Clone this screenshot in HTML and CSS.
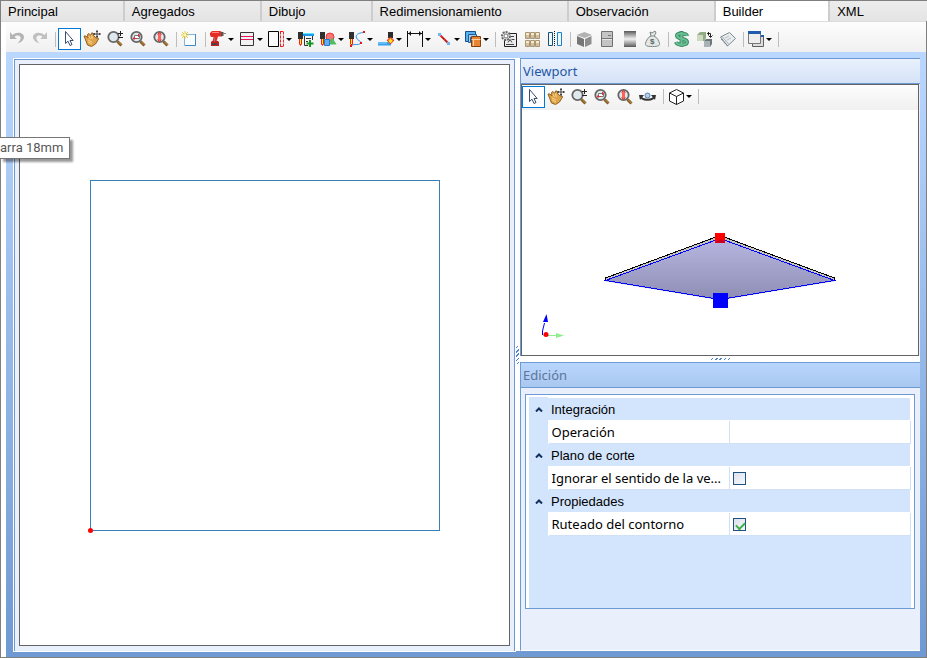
FILE: index.html
```html
<!DOCTYPE html>
<html lang="es">
<head>
    <meta charset="UTF-8">
    <meta name="viewport" content="width=device-width, initial-scale=1.0">
    <title>Builder</title>
    <link rel="stylesheet" href="styles.css">
</head>
<body>
    <!-- Shared icons and gradients -->
    <svg class="defs" aria-hidden="true">
        <defs>
            <linearGradient id="metal" x1="0" y1="0" x2="0" y2="1">
                <stop offset="0" stop-color="#555"/>
                <stop offset="0.15" stop-color="#888"/>
                <stop offset="0.5" stop-color="#f0f0f0"/>
                <stop offset="0.85" stop-color="#888"/>
                <stop offset="1" stop-color="#555"/>
            </linearGradient>
            <linearGradient id="board" x1="0" y1="0" x2="0" y2="1">
                <stop offset="0" stop-color="#b6b6e0"/>
                <stop offset="1" stop-color="#8d8db4"/>
            </linearGradient>
        </defs>
        <symbol id="pointer" viewBox="0 0 18 18">
            <path d="M5.500 1.500v12l2.500-2.300 2 4.300 2-1-2-4h3.200z" fill="#fff" stroke="#3b4d70"/>
        </symbol>
        <symbol id="hand" viewBox="0 0 18 18">
            <path d="M1 6l2 0 2 2L4.500 4.500l1.500-1 2 2L8.500 3l1.500 0 .8 3L12 7l1.500 1 1.500 0 .5 1-3 5-4 2.500L4.500 15 3 11z" fill="#dfa34a" stroke="#94601d"/>
            <path d="M5.500 6l2 3M8.500 5l.8 4M5 10l4 2M5 12l4 2" stroke="#f9d78e" fill="none"/>
            <path d="M14 0v8M10 4h8M13 1.500h2M13 6.500h2M11.500 3v2M16.500 3v2" stroke="#444" fill="none"/>
        </symbol>
        <symbol id="lens" viewBox="0 0 18 18">
            <path d="M10 10l1.500 1.500" stroke="#555" stroke-width="2"/>
            <path d="M11.500 11.500l4 4" stroke="#81561f" stroke-width="3"/>
            <path d="M12 11.500l3.500 3.500" stroke="#c59a4c"/>
            <circle cx="7.500" cy="7" r="5.200" fill="#dfe8ec" stroke="#666" stroke-width="1.800"/>
        </symbol>
        <symbol id="zoom" viewBox="0 0 18 18">
            <use href="#lens"/>
            <path d="M14.500 1v5M12 3.500h5M12 7.500h5" stroke="#222" fill="none"/>
        </symbol>
        <symbol id="zoom-window" viewBox="0 0 18 18">
            <use href="#lens"/>
            <path d="M5.500 5.500h5v3h-5z" fill="#fff" stroke="#777"/>
            <path d="M4 8.500h4M9.500 4v3M9 5h2M5 7v3" stroke="#d4353c" fill="none"/>
        </symbol>
        <symbol id="zoom-all" viewBox="0 0 18 18">
            <use href="#lens"/>
            <path d="M7.500 3v8" stroke="#ff6058" stroke-width="3"/>
            <path d="M5.500 4.500l2-2 2 2M5.500 9.500l2 2 2-2" stroke="#e03838" fill="none"/>
        </symbol>
        <symbol id="bit" viewBox="0 0 18 18">
            <path d="M0 2h5v7H0z" fill="#303030"/>
            <path d="M1 9h3v5l-1.500 2L1 14z" fill="#e22"/>
            <path d="M2 9h1v5H2z" fill="#ff0"/>
        </symbol>
    </svg>

    <div class="window">
        <nav class="tabs">
            <button class="tab">Principal</button>
            <button class="tab">Agregados</button>
            <button class="tab">Dibujo</button>
            <button class="tab">Redimensionamiento</button>
            <button class="tab">Observación</button>
            <button class="tab active">Builder</button>
            <button class="tab last">XML</button>
        </nav>

        <div class="toolbar main-toolbar">
            <button class="tool" aria-label="Deshacer"><svg viewBox="0 0 18 18"><path d="M2 2v7h7L6.500 7C9 4.500 13.500 5.500 12.500 9c-.5 2-2 3-3 4.500 3-1 6.500-3 6.500-6.500C16 2.500 9 1 4.500 5z" fill="#b4b4b4"/></svg></button>
            <button class="tool" aria-label="Rehacer"><svg viewBox="0 0 18 18"><path d="M16 2v7H9l2.500-2C9 4.500 4.500 5.500 5.500 9c.5 2 2 3 3 4.500C5.500 12.500 2 10.500 2 7c0-4.500 7-6 11.500-2z" fill="#c0c0c0"/></svg></button>
            <span class="sep"></span>
            <button class="tool selected" aria-label="Seleccionar"><svg><use href="#pointer"/></svg></button>
            <button class="tool" aria-label="Mover"><svg><use href="#hand"/></svg></button>
            <button class="tool" aria-label="Zoom"><svg><use href="#zoom"/></svg></button>
            <button class="tool" aria-label="Zoom ventana"><svg><use href="#zoom-window"/></svg></button>
            <button class="tool" aria-label="Zoom total"><svg><use href="#zoom-all"/></svg></button>
            <span class="sep"></span>
            <button class="tool" aria-label="Nuevo"><svg viewBox="0 0 18 18"><path d="M3.500 4.500h11v11h-11z" fill="#fafdff" stroke="#88b5d5"/><path d="M14.500 4v11.500H4" fill="none" stroke="#4389c4"/><path d="M4 1v8M0 5h8M1 2l6 6M7 2L1 8" stroke="#efcc3b"/><path d="M3 4h2v2H3z" fill="#fffbb8"/></svg></button>
            <span class="sep"></span>
            <button class="tool drop" aria-label="Perforación"><svg viewBox="0 0 18 18"><path d="M0 3l2-2h8l2 1v4.500H8l-1.500 5h-4l1-4.500H1L0 5z" fill="#e52b27"/><path d="M2 2.500h7" stroke="#ff8577"/><path d="M2 11h6l1 1v4H1v-4z" fill="#c91d20"/><path d="M11 2h2.500v4H11z" fill="#555"/><path d="M2 14h5" stroke="#444" stroke-width="2"/><path d="M13 3.500h3M4.500 7.500v4" stroke="#888"/></svg></button>
            <button class="tool drop" aria-label="Ranura"><svg viewBox="0 0 18 18"><path d="M1.500 2.500h13v13h-13z" fill="#f2f2f2" stroke="#333"/><path d="M2 6.500h12M2 9.500h12" stroke="#e41559"/></svg></button>
            <button class="tool drop" aria-label="Canto"><svg viewBox="0 0 18 18"><path d="M.5 1.500h10v15H.5z" fill="#fafafa" stroke="#000"/><path d="M12.500 1.500v15M15.500 1.500v15M12 1.500h4M12 16.500h4" stroke="#e22" stroke-dasharray="3 1" fill="none"/></svg></button>
            <button class="tool" aria-label="Agregar operación"><svg viewBox="0 0 18 18"><use href="#bit" x="1" width="18" height="18"/><path d="M6 3h11v3H6z" fill="#1d9be8"/><path d="M6 3.500h11" stroke="#55e8ff"/><path d="M15.500 6v4M7.500 6v9.500H11M9 8.500h5M9 11.500h2" stroke="#333" fill="none"/><path d="M13 10v7M9.500 13.500h7" stroke="#189420" stroke-width="2"/></svg></button>
            <button class="tool drop" aria-label="Figuras"><svg viewBox="0 0 18 18"><circle cx="10" cy="7" r="4" fill="#f87878" stroke="#ed3535"/><path d="M12 7l4.500 7.500H9z" fill="#50bd65"/><path d="M4.500 9.500h5v6h-5z" fill="#66acef" stroke="#257bd2"/><use href="#bit" width="18" height="18"/></svg></button>
            <button class="tool drop" aria-label="Contorno"><svg viewBox="0 0 18 18"><path d="M14.500 2.500C9 3 6 5 7.500 8s6 3.500 4 5.500-6 0-9.500 2" fill="none" stroke="#2993e8"/><path d="M14 1h2v2h-2zM11 12h2v2h-2zM1 15h2v2H1z" fill="#e11"/><use href="#bit" width="18" height="18"/></svg></button>
            <button class="tool drop" aria-label="Rebaje"><svg viewBox="0 0 18 18"><path d="M0 12h10l3 1v2.500H0z" fill="#39a2ee"/><path d="M0 13h9" stroke="#91d5ff"/><path d="M10 2h5v6h-5z" fill="#2c2c2c"/><path d="M11 8h3v2h2l-3.500 4L9 10h2z" fill="#ffe913" stroke="#ed3020"/></svg></button>
            <button class="tool drop" aria-label="Cota"><svg viewBox="0 0 18 18"><path d="M.5 1v16M15.500 1v16M1 3.500h14M3.500 1.500v4M12.500 1.500v4M2.500 2.500v2M13.500 2.500v2" stroke="#111" fill="none"/></svg></button>
            <button class="tool drop" aria-label="Línea"><svg viewBox="0 0 18 18"><path d="M3 4l10 10" stroke="#d22" stroke-width="2"/><path d="M4 5l8 8" stroke="#222" stroke-dasharray="1 3"/><path d="M2 3h3v3H2zM11 12h3v3h-3z" fill="#6fb5ef"/></svg></button>
            <button class="tool drop" aria-label="Orden"><svg viewBox="0 0 18 18"><path d="M.5 1.500h10v10H.5z" fill="#5cb0ee" stroke="#164f8b"/><path d="M3.500 4.500h8v3h-6v5h-2z" fill="#9bd1f7" stroke="#195f9e"/><path d="M6.500 6.500h9v10h-9z" fill="#e88434" stroke="#83400d"/><path d="M6.500 9.500h9M8.500 10v6" stroke="#ffd0a0"/></svg></button>
            <span class="sep"></span>
            <button class="tool" aria-label="Informe"><svg viewBox="0 0 18 18"><path d="M4.500 3.500h12v13h-12z" fill="#eee" stroke="#222"/><path d="M8 12.500l2-3 2 3M6 14.500h8M11 6.500h3M11.500 9.500h3" fill="none" stroke="#444"/><circle cx="6" cy="6" r="4" fill="#e8e8e8" stroke="#666" stroke-width="2" stroke-dasharray="2 1"/><circle cx="6" cy="6" r="2" fill="#fff" stroke="#777"/></svg></button>
            <button class="tool" aria-label="Piezas"><svg viewBox="0 0 18 18"><g fill="#d1bf9e" stroke="#aa9674"><path d="M2.500 2.500h4v6h-4zM7.500 2.500h4v6h-4zM12.500 2.500h4v6h-4zM2.500 10.500h4v6h-4zM7.500 10.500h4v6h-4zM12.500 10.500h4v6h-4z"/></g><path d="M3 4h3M8 4h3M13 4h3M3 12h3M8 12h3M13 12h3" stroke="#f6e9cc" stroke-width="2"/></svg></button>
            <button class="tool" aria-label="Simetría"><svg viewBox="0 0 18 18"><path d="M2.500 2.500h4v13h-4z" fill="#eef6fa" stroke="#165077"/><path d="M8.500 1v16" stroke="#111" stroke-dasharray="1 1"/><path d="M11.500 2.500h4v13h-4z" fill="#edf8ff" stroke="#1683cc"/></svg></button>
            <span class="sep"></span>
            <button class="tool" aria-label="Módulo"><svg viewBox="0 0 18 18"><path d="M1.500 5l8-3 7.500 3-7.500 3z" fill="#b2b2b2"/><path d="M2 6l7 3v8l-7-3z" fill="#777"/><path d="M10 9l6.500-3v8L10 17z" fill="#8e8e8e"/></svg></button>
            <button class="tool" aria-label="Puerta"><svg viewBox="0 0 18 18"><path d="M3.500 1.500h11v15h-11z" fill="#c4c4c4" stroke="#707070"/><path d="M4 8.500h10M10 5.500h3" stroke="#777"/><path d="M4 9.500h10" stroke="#e5e5e5"/></svg></button>
            <button class="tool" aria-label="Material"><svg viewBox="0 0 18 18"><path d="M3 1h12v16H3z" fill="url(#metal)"/></svg></button>
            <button class="tool" aria-label="Presupuesto"><svg viewBox="0 0 18 18"><path d="M6 2l2 1 3-2 1 2-2 3c3 1 5 5 5.500 7.500.5 2-1 3-7 3s-7.500-1-7-3C2 11 4 7 7 6z" fill="#e4e9e7" stroke="#7a8583"/><path d="M6 6h5" stroke="#8b9593"/><text x="6" y="14" class="bag-sign">$</text></svg></button>
            <span class="sep"></span>
            <button class="tool" aria-label="Costos"><svg viewBox="0 0 18 18"><path d="M8.500 1v16M14 6c-.5-3-9.500-3.500-10-.5-.5 4 10 2.500 10 6.500 0 3.500-10 3.500-11 0" fill="none" stroke="#378963" stroke-width="4"/><path d="M8.500 2v14M14 6c-.5-3-9.500-3.500-10-.5-.5 4 10 2.500 10 6.500 0 3.500-10 3.500-11 0" fill="none" stroke="#6abf91" stroke-width="2"/></svg></button>
            <button class="tool" aria-label="Reemplazar"><svg viewBox="0 0 18 18"><path d="M1 5l3-3h6v6l-2 3H1z" fill="#91ab83"/><path d="M1 5h6v6H1z" fill="#ccdabf"/><path d="M8 11l2-2h6v5l-2 3H8z" fill="#6b787b"/><path d="M8 11h6v6H8z" fill="#a9b3b6"/><path d="M11 3.500h3.500V7M12.500 5.500l2 2 2-2M12.500 2v3" fill="none" stroke="#222"/></svg></button>
            <button class="tool" aria-label="Etiqueta"><svg viewBox="0 0 18 18"><path d="M1.500 7l9-4.500 6 6-8 7.500z" fill="#e9edef" stroke="#7d8991"/><path d="M6 8l4-2M8 10l4-2" stroke="#b3bdc4" fill="none"/><path d="M3.500 7l6 7" stroke="#a3afb7"/><path d="M2 9l6.500 7" stroke="#596771" stroke-dasharray="1 1"/></svg></button>
            <span class="sep"></span>
            <button class="tool drop" aria-label="Ventanas"><svg viewBox="0 0 18 18"><path d="M4.500 5.500h11v11h-11z" fill="#dedede" stroke="#606060"/><path d="M4 5h12v2H4z" fill="#225cae"/><path d="M.5 1.500h12v12H.5z" fill="#eee" stroke="#777"/><path d="M0 1h13v3H0z" fill="#225cae"/></svg></button>
            <span class="sep"></span>
        </div>

        <main class="workspace">
            <section class="panel drawing-panel">
                <svg class="drawing" aria-label="Pieza">
                    <rect x="70.500" y="115.500" width="349" height="350" fill="none" stroke="#3b7fb5"/>
                    <circle cx="70.500" cy="465.500" r="2.500" fill="#f00"/>
                </svg>
            </section>

            <div class="splitter vertical"><span class="grip"></span></div>

            <div class="side">
                <section class="panel viewport">
                    <h2 class="panel-title">Viewport</h2>
                    <div class="view">
                        <div class="toolbar">
                            <button class="tool selected" aria-label="Seleccionar"><svg><use href="#pointer"/></svg></button>
                            <button class="tool" aria-label="Mover"><svg><use href="#hand"/></svg></button>
                            <button class="tool" aria-label="Zoom"><svg><use href="#zoom"/></svg></button>
                            <button class="tool" aria-label="Zoom ventana"><svg><use href="#zoom-window"/></svg></button>
                            <button class="tool" aria-label="Zoom total"><svg><use href="#zoom-all"/></svg></button>
                            <button class="tool" aria-label="Orbitar"><svg viewBox="0 0 18 18"><path d="M2 8c0 5 13 5 13 0" fill="none" stroke="#333" stroke-width="2"/><path d="M0 7h5L1 12zM17 7h-5l4 5z" fill="#333"/><circle cx="8.500" cy="7.500" r="2.500" fill="#b5ceeb" stroke="#5b7fae"/></svg></button>
                            <span class="sep"></span>
                            <button class="tool drop" aria-label="Vistas"><svg viewBox="0 0 18 18"><path d="M1.500 5l7-3.500 7 3.500v8l-7 3.500-7-3.500zM1.500 5l7 3.500 7-3.500M8.500 8.500v8" fill="#fff" stroke="#222"/></svg></button>
                            <span class="sep"></span>
                        </div>
                        <svg class="scene" aria-label="Vista 3D">
                            <path d="M83 168l115-43 115 43v3L198 190 83 171z" fill="#c6c6bf"/>
                            <path d="M83 171l115-42 115 42-115 19z" fill="url(#board)"/>
                            <g fill="none" shape-rendering="crispEdges">
                                <path d="M83.500 170v-2L198 125.500l114.500 42.500v2" stroke="#000"/>
                                <path d="M83.500 170.500l114.500-42 114.500 42-114.500 19z" stroke="#00f"/>
                            </g>
                            <path d="M193 123h10v10h-10z" fill="#f00"/>
                            <path d="M194 132l4-3 5 2v2h-9z" fill="#d00020"/>
                            <path d="M191 183h15v15h-15z" fill="#00f"/>
                            <path d="M20.500 225v-4l2-8" stroke="#00f" fill="none"/>
                            <path d="M24.500 204l1.500 8h-5z" fill="#00f"/>
                            <path d="M21 225.500h14" stroke="#90ee90"/>
                            <path d="M34 223l8 2.500-8 2.500z" fill="#90ee90"/>
                            <circle cx="24" cy="224.500" r="2.500" fill="#f00"/>
                        </svg>
                    </div>
                </section>

                <div class="splitter horizontal"><span class="grip"></span></div>

                <section class="panel editor">
                    <h2 class="panel-title inactive">Edición</h2>
                    <div class="properties">
                        <div class="properties-inner">
                            <table>
                                <colgroup><col class="col-arrow"><col class="col-name"><col></colgroup>
                                <tbody>
                                    <tr class="group"><td><svg viewBox="0 0 8 5"><path d="M1 4.500l3-3 3 3" fill="none" stroke="#12305f" stroke-width="2"/></svg></td><th colspan="2">Integración</th></tr>
                                    <tr><td></td><th><label for="operation">Operación</label></th><td class="value"><input type="text" id="operation"></td></tr>
                                    <tr class="group"><td><svg viewBox="0 0 8 5"><path d="M1 4.500l3-3 3 3" fill="none" stroke="#12305f" stroke-width="2"/></svg></td><th colspan="2">Plano de corte</th></tr>
                                    <tr><td></td><th><label for="grain">Ignorar el sentido de la ve...</label></th><td class="value"><input type="checkbox" id="grain"></td></tr>
                                    <tr class="group"><td><svg viewBox="0 0 8 5"><path d="M1 4.500l3-3 3 3" fill="none" stroke="#12305f" stroke-width="2"/></svg></td><th colspan="2">Propiedades</th></tr>
                                    <tr><td></td><th><label for="outline">Ruteado del contorno</label></th><td class="value"><input type="checkbox" id="outline" checked></td></tr>
                                </tbody>
                            </table>
                        </div>
                    </div>
                </section>
            </div>
        </main>

        <div class="tooltip">arra 18mm</div>
    </div>
</body>
</html>
```

FILE: styles.css
```css
/* Reset styles */
* {
    margin: 0;
    padding: 0;
    box-sizing: border-box;
}

body {
    font-family: "Liberation Sans", Arial, sans-serif;
    font-size: 13px;
    color: #000;
    background-color: #fff;
}

button {
    font: inherit;
    color: inherit;
    background: none;
    border: none;
}

.defs {
    position: absolute;
    width: 0;
    height: 0;
}

.window {
    display: flex;
    flex-direction: column;
    min-height: 100vh;
    position: relative;
    border: 1px solid #7f7f7f;
}

/* Tabs */
.tabs {
    display: flex;
    height: 21px;
    background-color: #e6e6e6;
    border-bottom: 1px solid #dcdcdc;
}

.tab {
    padding: 0 65px 0 7px;
    text-align: left;
    background: linear-gradient(#ececec, #e4e4e4);
    border-right: 2px solid #cdcdcd;
}

.tab.active {
    background: #fff;
}

.tab.last {
    flex: 1;
    border-right: none;
}

/* Toolbars */
.toolbar {
    display: flex;
    align-items: center;
    background: linear-gradient(#fdfdfd, #f0f0f0);
}

.main-toolbar {
    height: 30px;
    padding: 6px 0 2px;
    margin-left: 5px;
}

.tool {
    display: flex;
    align-items: center;
    width: 23px;
    height: 22px;
    padding: 0 3px 0 2px;
}

.tool svg {
    display: block;
    flex: none;
    width: 18px;
    height: 18px;
}

.tool.selected {
    padding: 0 2px 0 1px;
    background-color: #fff;
    border: 1px solid #0078d7;
}

.tool.drop {
    width: 29px;
}

.tool.drop::after {
    content: "";
    border: 3px solid transparent;
    border-top-color: #000;
    border-bottom: none;
}

.sep {
    width: 6px;
    height: 15px;
    background: linear-gradient(#bdbdbd, #bdbdbd) 3px 0 / 1px 100% no-repeat;
}

.bag-sign {
    font-size: 8px;
    font-weight: bold;
    fill: #58645f;
}

/* Workspace */
.workspace {
    display: grid;
    grid-template-columns: minmax(0, 1fr) 5px 400px;
    flex: 1;
    margin-left: 5px;
    padding: 6px 6px 6px 8px;
    background: linear-gradient(#bad7ff, #6f99d2);
}

.panel {
    background-color: #e9f0fb;
    border: 1px solid #6d99d4;
}

.drawing-panel {
    display: flex;
    margin-top: 1px;
    padding: 4px 4px 5px;
    border-bottom: none;
    box-shadow: 0 0 0 1px #fff;
}

.drawing {
    flex: 1;
    min-width: 0;
    height: auto;
    background-color: #fff;
    border: 1px solid #646464;
}

.splitter {
    display: flex;
    align-items: center;
    justify-content: center;
    background-color: #fff;
}

.grip {
    background: repeating-linear-gradient(135deg, #fff 0 1px, #4d83cc 1px 2px, #fff 2px 3px);
}

.vertical .grip {
    width: 3px;
    height: 18px;
}

.horizontal .grip {
    width: 19px;
    height: 2px;
}

.side {
    display: grid;
    grid-template-rows: minmax(200px, 1fr) 6px 289px;
}

.viewport {
    display: flex;
    flex-direction: column;
    border-right: none;
    border-bottom: none;
}

.panel-title {
    height: 25px;
    padding-left: 2px;
    font: 13px/24px "Noto Sans", sans-serif;
    color: #2457a7;
    background: linear-gradient(#e9f1fd, #d5e2f6);
    border-bottom: 1px solid #6d99d4;
}

.panel-title.inactive {
    color: #5e7599;
    background: linear-gradient(#b8d6fe, #a9c8f0);
}

.view {
    display: flex;
    flex-direction: column;
    flex: 1;
    margin-right: 1px;
    background-color: #fff;
    border: 1px solid #646464;
}

.view .toolbar {
    height: 25px;
    padding-bottom: 2px;
}

.scene {
    flex: 1;
    width: 100%;
    min-height: 0;
}

/* Property grid */
.editor {
    border-right: none;
    border-bottom: 1px solid #fff;
}

.properties {
    height: 215px;
    margin: 6px 5px 0 4px;
    padding: 2px 3px 0;
    background-color: #fff;
    border: 1px solid #6d99d4;
}

.properties-inner {
    height: 100%;
    background-color: #d3e5fc;
}

table {
    width: 100%;
    table-layout: fixed;
    border-collapse: collapse;
}

.col-arrow {
    width: 19px;
}

.col-name {
    width: 181px;
}

tr {
    height: 23px;
}

td {
    text-align: center;
    background-color: #d3e5fc;
    border-right: 1px solid #fff;
}

td svg {
    display: block;
    width: 8px;
    height: 5px;
    margin: 0 auto;
}

th {
    padding-left: 3px;
    font: 13px/20px "Noto Sans", sans-serif;
    text-align: left;
    white-space: nowrap;
    background-color: #fff;
    border: 1px solid #cfe0f7;
}

.group td {
    border-right: none;
}

.group th {
    padding-top: 2px;
    font-family: "Liberation Sans", Arial, sans-serif;
    background-color: #d3e5fc;
    border: 1px solid #fff;
    border-left: none;
}

.value {
    padding-left: 3px;
    text-align: left;
    background-color: #fff;
    border: 1px solid #cfe0f7;
}

.value input {
    display: block;
}

input[type="text"] {
    width: 100%;
    height: 20px;
    border: none;
    outline: none;
}

input[type="checkbox"] {
    appearance: none;
    width: 13px;
    height: 13px;
    background: linear-gradient(135deg, #dde1ee, #f7f8fb);
    border: 1px solid #1c5180;
}

input[type="checkbox"]:checked::before {
    content: "";
    display: block;
    width: 7px;
    height: 4px;
    margin: 3px 0 0 2px;
    border-left: 2px solid #3fae49;
    border-bottom: 2px solid #3fae49;
    transform: rotate(-45deg);
}

/* Tooltip over the drawing */
.tooltip {
    position: absolute;
    top: 136px;
    left: -1px;
    height: 22px;
    padding-right: 6px;
    font: 13px/20px Roboto, sans-serif;
    color: #575757;
    background-color: #fff;
    border: 1px solid #767676;
    border-left: none;
    box-shadow: 3px 3px 2px rgba(0, 0, 0, 0.4);
}
```
